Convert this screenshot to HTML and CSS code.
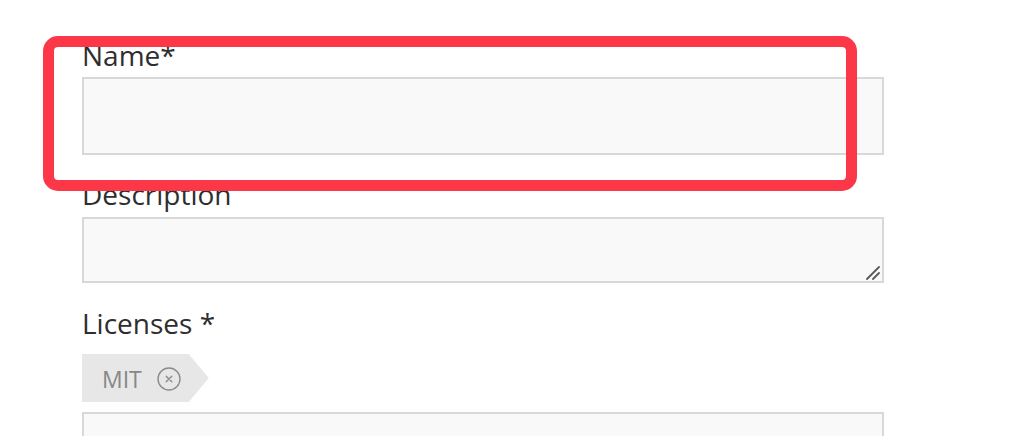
FILE: index.html
```html
<!DOCTYPE html>
<html>
<head>
    <meta charset="UTF-8">
    <meta name="viewport" content="width=device-width, initial-scale=1.0">
    <title>New package</title>
    <link rel="stylesheet" href="styles.css">
</head>
<body>

<div class="page">
    <form class="package-form">
        <div class="field field-name">
            <label for="name">Name*</label>
            <input type="text" id="name" name="name">
        </div>

        <div class="field field-description">
            <label for="description">Description</label>
            <div class="textarea-wrap">
                <textarea id="description" name="description"></textarea>
                <svg class="grip" width="14" height="14" viewBox="0 0 14 14">
                    <path d="M1 13 L13 1 M7 13 L13 7" stroke="#5a5a5a" stroke-width="1.8" stroke-linecap="round"/>
                </svg>
            </div>
        </div>

        <div class="field field-licenses">
            <label for="licenses">Licenses *</label>
            <div class="tag-list">
                <span class="tag">
                    MIT
                    <svg class="tag-remove" width="24" height="24" viewBox="0 0 24 24">
                        <circle cx="12" cy="12" r="11" fill="none" stroke="#8c8c8c" stroke-width="1.4"/>
                        <path d="M9.2 9.2 L14.8 14.8 M14.8 9.2 L9.2 14.8" stroke="#8c8c8c" stroke-width="1.4" stroke-linecap="round"/>
                    </svg>
                </span>
            </div>
            <input type="text" id="licenses" name="licenses">
        </div>
    </form>

    <!-- annotation drawn over the name field -->
    <div class="highlight"></div>
</div>

</body>
</html>
```

FILE: styles.css
```css
html, body {
    margin: 0;
    height: 100%;
    overflow: hidden;
    background: #fff;
}

body {
    font-family: 'Open Sans', 'Noto Sans', sans-serif;
    color: #2e2e2e;
}

.page {
    position: relative;
    padding: 36px 0 0 82px;
}

.package-form {
    width: 802px;
}

.field {
    margin-bottom: 20px;
}

.field-description {
    margin-bottom: 21px;
}

label {
    display: block;
    font-size: 28px;
    line-height: 38px;
    margin-bottom: 3px;
}

.field-description label {
    margin-bottom: 4px;
}

input[type="text"], textarea {
    display: block;
    width: 100%;
    box-sizing: border-box;
    margin: 0;
    border: 2px solid #d8d8d8;
    background-color: #f9f9f9;
    font-family: inherit;
    font-size: 18px;
    padding: 8px 12px;
    outline: none;
}

input[type="text"] {
    height: 78px;
}

.textarea-wrap {
    position: relative;
}

textarea {
    height: 66px;
    resize: none;
}

.grip {
    position: absolute;
    right: 4px;
    bottom: 3px;
    display: block;
}

.tag-list {
    display: flex;
    margin: 12px 0 10px;
}

.tag {
    display: flex;
    align-items: center;
    gap: 15px;
    height: 48px;
    padding: 2px 28px 0 20px;
    box-sizing: border-box;
    background-color: #e7e7e7;
    color: #888;
    font-size: 23px;
    clip-path: polygon(0 0, calc(100% - 20px) 0, 100% 50%, calc(100% - 20px) 100%, 0 100%);
}

.tag-remove {
    display: block;
}

.highlight {
    position: absolute;
    left: 43px;
    top: 36px;
    width: 814px;
    height: 155px;
    box-sizing: border-box;
    border: 11px solid #fb3748;
    border-radius: 15px;
    pointer-events: none;
}
```
